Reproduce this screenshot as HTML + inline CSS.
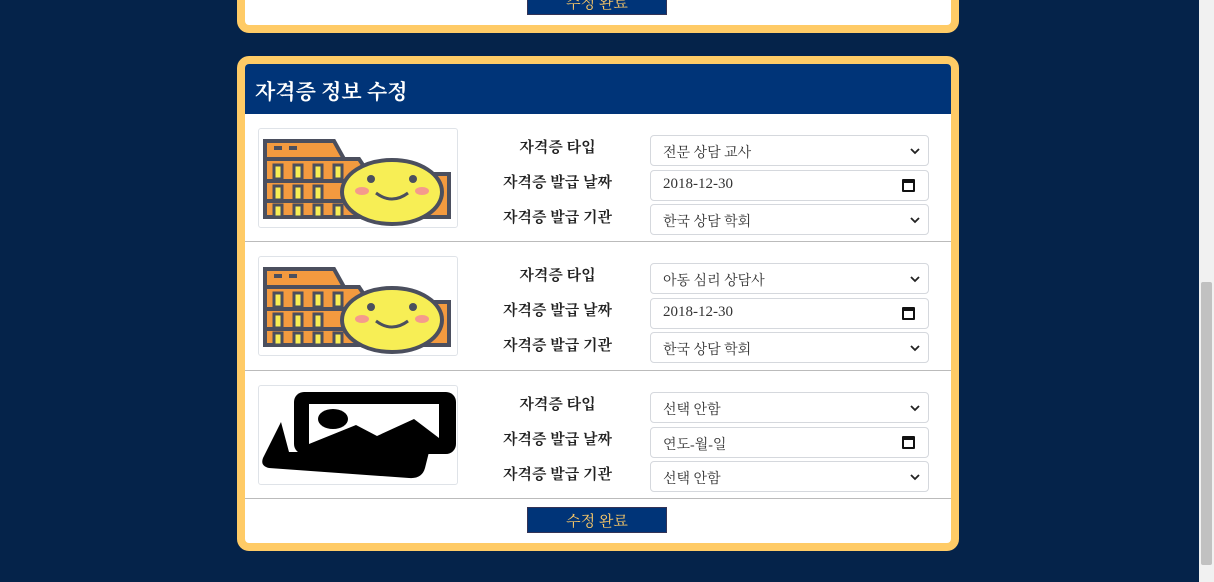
<!DOCTYPE html>
<html><head><meta charset="utf-8"><style>
*{box-sizing:border-box;margin:0;padding:0}
body{width:1214px;height:582px;overflow:hidden;background:#05234a;position:relative;font-family:"Liberation Serif","Noto Serif CJK SC",serif}
.panel{position:absolute;left:237px;width:722px;background:#fff;border:8px solid #ffcb66;border-radius:12px;overflow:hidden}
.hdr{height:50px;background:#003478;color:#fff;font-size:21px;font-weight:bold;padding:12px 0 0 10px;font-family:"Noto Serif CJK SC",serif}
.row{position:relative;height:128px;border-bottom:1px solid #bbb}
.img{position:absolute;left:13px;top:14px;width:200px;height:100px;border:1px solid #dfe3e8;border-radius:3px;overflow:hidden}
.lab{position:absolute;left:240px;width:145px;text-align:center;font-size:15px;font-weight:bold;color:#222;font-family:"Noto Serif CJK SC",serif}
.sel{position:absolute;left:405px;width:279px;height:31px;border:1px solid #d5d8dd;border-radius:4px;font-size:14px;color:#333;padding:6px 0 0 12px}
.sel.d{font-size:15px;padding-top:5px}
.sel svg{position:absolute;right:8px;top:12px}
.cal{position:absolute;right:13px;top:8px;width:13px;height:13px;border:2px solid #111;border-top-width:4px;border-radius:1px}
.btn{position:absolute;left:282px;width:140px;height:26px;background:#003478;color:#ffcb66;font-size:15px;text-align:center;padding-top:2px;font-family:"Noto Serif CJK SC",serif;border:1px solid #335}
.sb{position:absolute;left:1199px;top:0;width:15px;height:582px;background:#f1f1f1}
.th{position:absolute;left:1201px;top:282px;width:11px;height:283px;background:#c1c1c1;border-radius:2px}
</style></head><body>
<div class="panel" style="top:-20px;height:53px"><div class="btn" style="top:1px">수정 완료</div></div>
<div class="panel" style="top:56px;height:495px">
<div class="hdr">자격증 정보 수정</div>
<div class="row">
<div class="img"><svg width="200" height="100" viewBox="0 0 200 100">
<g stroke="#4b4f5e" stroke-width="4">
<path d="M6 12H75L85 30H100L110 45H190V88H6Z" fill="#f39a3f"/>
<line x1="6" y1="30" x2="100" y2="30"/><line x1="6" y1="52" x2="110" y2="52"/><line x1="6" y1="72" x2="110" y2="72"/>
</g>
<g fill="#f7ee55" stroke="#4b4f5e" stroke-width="3">
<rect x="15" y="36" width="8" height="14"/><rect x="35" y="36" width="8" height="14"/><rect x="55" y="36" width="8" height="14"/><rect x="75" y="36" width="8" height="14"/>
<rect x="15" y="57" width="8" height="14"/><rect x="35" y="57" width="8" height="14"/><rect x="55" y="57" width="8" height="14"/>
<rect x="15" y="76" width="8" height="12"/><rect x="35" y="76" width="8" height="12"/><rect x="55" y="76" width="8" height="12"/><rect x="75" y="76" width="8" height="12"/>
</g>
<rect x="15" y="17" width="8" height="4" fill="#4b4f5e"/><rect x="30" y="17" width="8" height="4" fill="#4b4f5e"/>
<ellipse cx="133" cy="63" rx="50" ry="32" fill="#f7ee55" stroke="#4b4f5e" stroke-width="4"/>
<circle cx="112" cy="50" r="4" fill="#4b4f5e"/><circle cx="154" cy="50" r="4" fill="#4b4f5e"/>
<ellipse cx="103" cy="62" rx="7" ry="4" fill="#f59a8c"/><ellipse cx="163" cy="62" rx="7" ry="4" fill="#f59a8c"/>
<path d="M117 64Q133 76 149 64" fill="none" stroke="#4b4f5e" stroke-width="3"/>
</svg></div>
<div class="lab" style="top:22px">자격증 타입</div><div class="lab" style="top:57px">자격증 발급 날짜</div><div class="lab" style="top:92px">자격증 발급 기관</div>
<div class="sel" style="top:21px">전문 상담 교사<svg width="10" height="7"><path d="M1 1L5 5L9 1" fill="none" stroke="#222" stroke-width="1.8"/></svg></div>
<div class="sel d" style="top:56px">2018-12-30<span class="cal"></span></div>
<div class="sel" style="top:90px">한국 상담 학회<svg width="10" height="7"><path d="M1 1L5 5L9 1" fill="none" stroke="#222" stroke-width="1.8"/></svg></div>
</div>
<div class="row" style="height:129px">
<div class="img"><svg width="200" height="100" viewBox="0 0 200 100">
<g stroke="#4b4f5e" stroke-width="4">
<path d="M6 12H75L85 30H100L110 45H190V88H6Z" fill="#f39a3f"/>
<line x1="6" y1="30" x2="100" y2="30"/><line x1="6" y1="52" x2="110" y2="52"/><line x1="6" y1="72" x2="110" y2="72"/>
</g>
<g fill="#f7ee55" stroke="#4b4f5e" stroke-width="3">
<rect x="15" y="36" width="8" height="14"/><rect x="35" y="36" width="8" height="14"/><rect x="55" y="36" width="8" height="14"/><rect x="75" y="36" width="8" height="14"/>
<rect x="15" y="57" width="8" height="14"/><rect x="35" y="57" width="8" height="14"/><rect x="55" y="57" width="8" height="14"/>
<rect x="15" y="76" width="8" height="12"/><rect x="35" y="76" width="8" height="12"/><rect x="55" y="76" width="8" height="12"/><rect x="75" y="76" width="8" height="12"/>
</g>
<rect x="15" y="17" width="8" height="4" fill="#4b4f5e"/><rect x="30" y="17" width="8" height="4" fill="#4b4f5e"/>
<ellipse cx="133" cy="63" rx="50" ry="32" fill="#f7ee55" stroke="#4b4f5e" stroke-width="4"/>
<circle cx="112" cy="50" r="4" fill="#4b4f5e"/><circle cx="154" cy="50" r="4" fill="#4b4f5e"/>
<ellipse cx="103" cy="62" rx="7" ry="4" fill="#f59a8c"/><ellipse cx="163" cy="62" rx="7" ry="4" fill="#f59a8c"/>
<path d="M117 64Q133 76 149 64" fill="none" stroke="#4b4f5e" stroke-width="3"/>
</svg></div>
<div class="lab" style="top:22px">자격증 타입</div><div class="lab" style="top:57px">자격증 발급 날짜</div><div class="lab" style="top:92px">자격증 발급 기관</div>
<div class="sel" style="top:21px">아동 심리 상담사<svg width="10" height="7"><path d="M1 1L5 5L9 1" fill="none" stroke="#222" stroke-width="1.8"/></svg></div>
<div class="sel d" style="top:56px">2018-12-30<span class="cal"></span></div>
<div class="sel" style="top:90px">한국 상담 학회<svg width="10" height="7"><path d="M1 1L5 5L9 1" fill="none" stroke="#222" stroke-width="1.8"/></svg></div>
</div>
<div class="row">
<div class="img"><svg width="200" height="100" viewBox="0 0 200 100">
<path d="M22 36L4 72Q1 80 10 82L150 92Q163 93 166 82L170 66L30 66Z" fill="#000"/>
<rect x="35" y="6" width="162" height="62" rx="10" fill="#000"/>
<path d="M50 18H180V52L155 33L118 50L97 39L50 58Z" fill="#fff"/>
<ellipse cx="74" cy="33" rx="15" ry="10" fill="#000"/>
</svg></div>
<div class="lab" style="top:22px">자격증 타입</div><div class="lab" style="top:57px">자격증 발급 날짜</div><div class="lab" style="top:92px">자격증 발급 기관</div>
<div class="sel" style="top:21px">선택 안함<svg width="10" height="7"><path d="M1 1L5 5L9 1" fill="none" stroke="#222" stroke-width="1.8"/></svg></div>
<div class="sel" style="top:56px">연도-월-일<span class="cal"></span></div>
<div class="sel" style="top:90px">선택 안함<svg width="10" height="7"><path d="M1 1L5 5L9 1" fill="none" stroke="#222" stroke-width="1.8"/></svg></div>
</div>
<div class="btn" style="top:443px">수정 완료</div>
</div>
<div class="sb"></div><div class="th"></div>
</body></html>
